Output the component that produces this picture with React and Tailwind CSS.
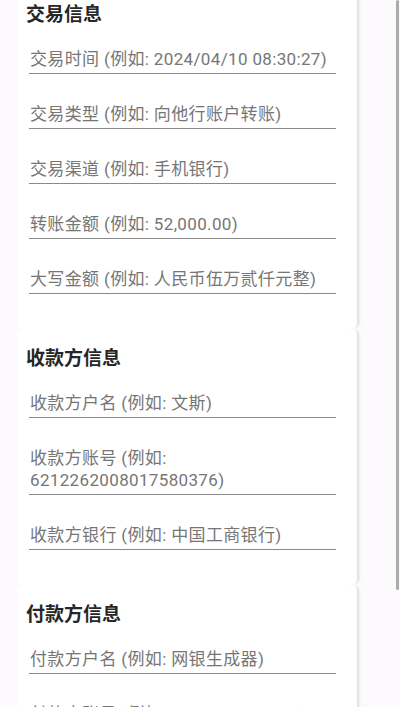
import React from "react";

const font = { fontFamily: '"Roboto", "Noto Sans CJK SC", sans-serif' };

function Field({ children }) {
  return (
    <div className="ml-[12px] mr-[21px] border-b border-[#8a8a8a] pb-[3px] pl-[1px] text-[17px] leading-[22px] tracking-[0.35px] text-[#767676]">
      {children}
    </div>
  );
}

function Card({ title, fields, first }) {
  return (
    <div
      className={
        "bg-white rounded-md shadow-[4px_0_3px_-2px_rgba(0,0,0,0.12)] pt-[18px] pb-[35px] " +
        (first ? "-mt-[15px]" : "")
      }
    >
      <div className="pl-[9px] text-[19px] leading-[24px] font-bold text-[#262626]">{title}</div>
      <div className="mt-[21px] flex flex-col gap-[29px]">
        {fields.map((f, i) => (
          <Field key={i}>{f}</Field>
        ))}
      </div>
    </div>
  );
}

export default function App() {
  return (
    <div className="relative h-[707px] overflow-hidden bg-[#fcfafc]" style={font}>
      <div className="flex flex-col pl-[17px] w-[357px]">
        <Card
          first
          title="交易信息"
          fields={[
            "交易时间 (例如: 2024/04/10 08:30:27)",
            "交易类型 (例如: 向他行账户转账)",
            "交易渠道 (例如: 手机银行)",
            "转账金额 (例如: 52,000.00)",
            "大写金额 (例如: 人民币伍万贰仟元整)",
          ]}
        />
        <Card
          title="收款方信息"
          fields={[
            "收款方户名 (例如: 文斯)",
            <>
              收款方账号 (例如:
              <br />
              6212262008017580376)
            </>,
            "收款方银行 (例如: 中国工商银行)",
          ]}
        />
        <Card
          title="付款方信息"
          fields={[
            "付款方户名 (例如: 网银生成器)",
            "付款方账号 (例如: 1000111111000)",
            "付款方银行 (例如: 中国建设银行)",
          ]}
        />
      </div>
      <div className="absolute right-[1px] top-0 h-[590px] w-[3px] rounded-full bg-[#ababab]" />
    </div>
  );
}
